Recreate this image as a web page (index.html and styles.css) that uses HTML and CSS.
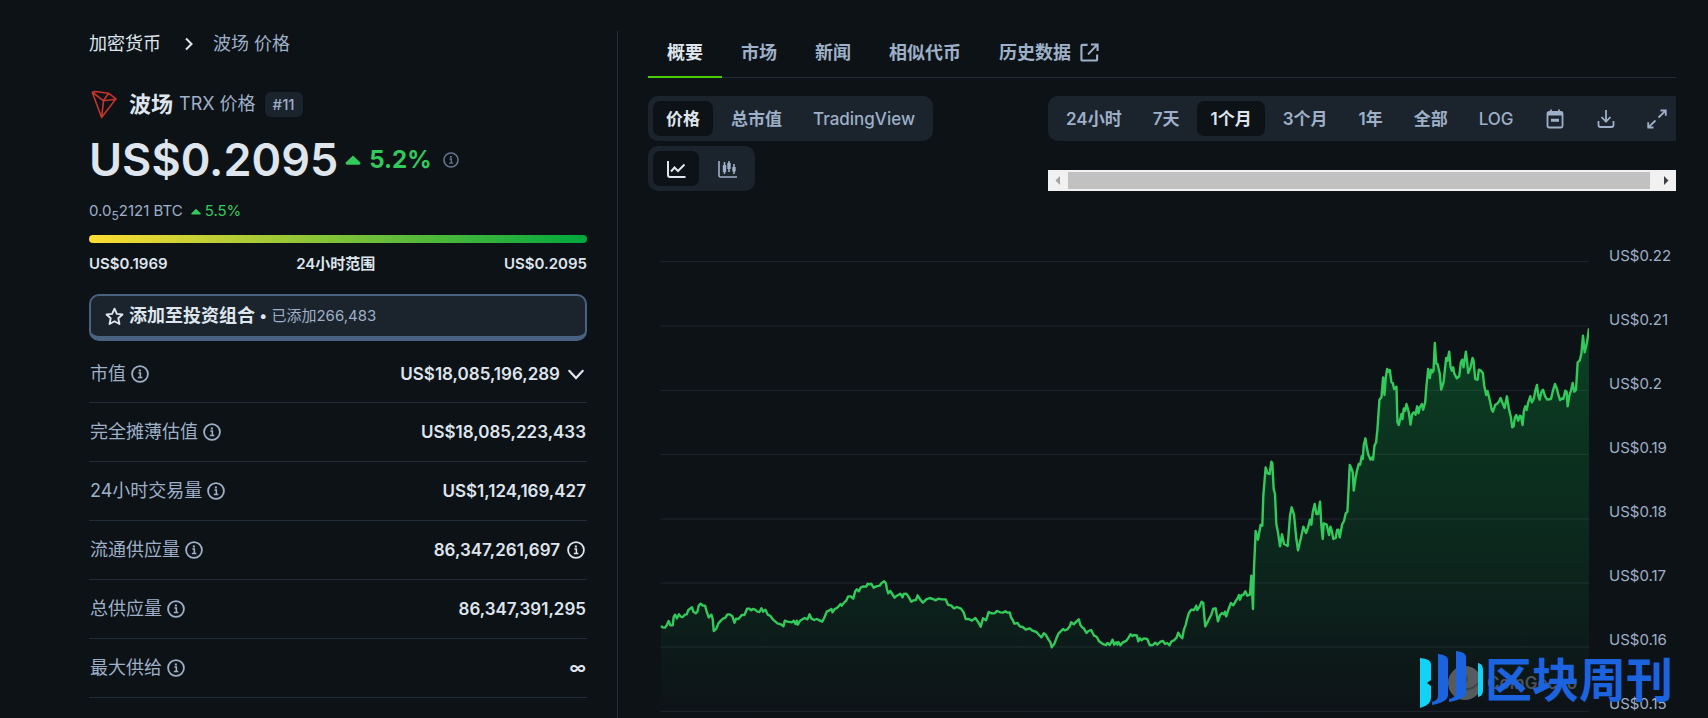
FILE: index.html
```html
<!DOCTYPE html>
<html lang="zh-CN">
<head>
<meta charset="utf-8">
<meta name="viewport" content="width=device-width, initial-scale=1">
<title>波场 价格</title>
<link rel="stylesheet" href="styles.css">
</head>
<body>
<svg class="defs" aria-hidden="true">
  <symbol id="info" viewBox="0 0 20 20"><circle cx="10" cy="10" r="8.8" fill="none" stroke="currentColor" stroke-width="2"/><path d="M8.2 8.8h2.2v5M7.6 13.9h5" fill="none" stroke="currentColor" stroke-width="1.7"/><rect x="8.7" y="5" width="2.3" height="2.2" fill="currentColor"/></symbol>
  <symbol id="up" viewBox="0 0 16 10"><path d="M8 0.5 15.3 7.6Q16 9.6 14 9.7H2Q0 9.6.7 7.6Z" fill="currentColor"/></symbol>
</svg>
<main class="page">
  <section class="coin">
    <nav class="crumbs" aria-label="路径">
      <a class="crumb-link" href="#">加密货币</a>
      <svg class="crumb-arrow" viewBox="0 0 8 14" fill="none" stroke="currentColor" stroke-width="2"><path d="M1 1.5 6.5 7 1 12.5"/></svg>
      <span>波场 价格</span>
    </nav>
    <h1 class="title">
      <svg class="logo" viewBox="0 0 26 29" fill="none" stroke="#c4342b" stroke-width="1.6" stroke-linejoin="round"><path d="M1.500 3 Q1.500 1.500 4 1.500L17.500 3.200 25 8.800 10.600 27.500ZM1.800 2.500 12.500 10.800 10.600 27.500M12.500 10.800 25 9.200M12.500 10.800 17.500 3.200"/></svg>
      <span class="name">波场</span>
      <span class="ticker">TRX 价格</span>
      <span class="rank">#11</span>
    </h1>
    <div class="price">
      <span class="amount">US$0.2095</span>
      <span class="change"><svg class="up-lg"><use href="#up"/></svg>5.2%</span>
      <svg class="info-sm"><use href="#info"/></svg>
    </div>
    <div class="btc">
      <span>0.0<sub>5</sub>2121 BTC</span>
      <span class="btc-change"><svg class="up-sm"><use href="#up"/></svg>5.5%</span>
    </div>
    <div class="range-bar"></div>
    <div class="range"><span>US$0.1969</span><span>24小时范围</span><span>US$0.2095</span></div>
    <button class="portfolio" type="button">
      <svg class="star" viewBox="0 0 20 20" fill="none" stroke="currentColor" stroke-width="2" stroke-linejoin="round"><path d="M10 1.8 12.5 7.2 18.4 7.9 14 11.9 15.2 17.9 10 15 4.8 17.9 6 11.9 1.6 7.9 7.5 7.2Z"/></svg>
      <span class="portfolio-label">添加至投资组合</span>
      <span class="dot">•</span>
      <span class="portfolio-count">已添加266,483</span>
    </button>
    <table class="stats">
      <tr class="first"><th scope="row"><span class="cell">市值<svg class="info"><use href="#info"/></svg></span></th><td><span class="cell end">US$18,085,196,289<svg class="info" viewBox="0 0 20 20" fill="none" stroke="currentColor" stroke-width="2.4" stroke-linecap="round"><path d="M2.500 6.500 10 14.500 17.500 6.500"/></svg></span></td></tr>
      <tr><th scope="row"><span class="cell">完全摊薄估值<svg class="info"><use href="#info"/></svg></span></th><td>US$18,085,223,433</td></tr>
      <tr><th scope="row"><span class="cell">24小时交易量<svg class="info"><use href="#info"/></svg></span></th><td>US$1,124,169,427</td></tr>
      <tr><th scope="row"><span class="cell">流通供应量<svg class="info"><use href="#info"/></svg></span></th><td><span class="cell end">86,347,261,697<svg class="info"><use href="#info"/></svg></span></td></tr>
      <tr><th scope="row"><span class="cell">总供应量<svg class="info"><use href="#info"/></svg></span></th><td>86,347,391,295</td></tr>
      <tr><th scope="row"><span class="cell">最大供给<svg class="info"><use href="#info"/></svg></span></th><td>∞</td></tr>
    </table>
  </section>
  <section class="market">
    <nav class="tabs" aria-label="栏目">
      <a class="tab active" href="#">概要</a>
      <a class="tab" href="#">市场</a>
      <a class="tab" href="#">新闻</a>
      <a class="tab" href="#">相似代币</a>
      <a class="tab" href="#">历史数据<svg class="ext" viewBox="0 0 20 20" fill="none" stroke="currentColor" stroke-width="2.2"><path d="M8 2H2.500Q1.500 2 1.500 3V17.500Q1.500 18.500 2.500 18.500H17Q18 18.500 18 17.500V12M11.500 1.500H18.500V8.500M18 2 8.500 12"/></svg></a>
    </nav>
    <div class="controls">
      <div class="control-col">
        <div class="group">
          <button class="opt strong on" type="button">价格</button>
          <button class="opt strong" type="button">总市值</button>
          <button class="opt" type="button">TradingView</button>
        </div>
        <div class="group">
          <button class="opt on" type="button" aria-label="折线图"><svg class="ico" viewBox="0 0 20 20" fill="none" stroke="currentColor" stroke-width="2"><path d="M2 2V16Q2 18 4 18H19.500M5 12.500 8.500 8.500 12 12 18.500 5.500"/></svg></button>
          <button class="opt" type="button" aria-label="蜡烛图"><svg class="ico" viewBox="0 0 20 20" fill="none" stroke="currentColor" stroke-width="1.600"><path d="M2 2V16.500Q2 18 3.500 18H20M7.500 3V15M12 2V13M17 5V15"/><path d="M7.500 6V13M12 4V10M17 8V12.500" stroke-width="3.400"/></svg></button>
        </div>
      </div>
      <div class="control-col periods">
        <div class="group clipped">
          <button class="opt strong" type="button">24小时</button>
          <button class="opt strong" type="button">7天</button>
          <button class="opt strong on" type="button">1个月</button>
          <button class="opt strong" type="button">3个月</button>
          <button class="opt strong" type="button">1年</button>
          <button class="opt strong" type="button">全部</button>
          <button class="opt" type="button">LOG</button>
          <button class="opt tool" type="button" aria-label="日期"><svg class="ico-lg" viewBox="0 0 22 22" fill="none" stroke="currentColor" stroke-width="1.800"><rect x="3.500" y="4" width="15" height="15.500" rx="1.500"/><path d="M7 1.500V5M15 1.500V5"/><path d="M3.500 6H18.500" stroke-width="3"/><path d="M7 12.200H15" stroke-width="3"/></svg></button>
          <button class="opt tool" type="button" aria-label="下载"><svg class="ico-lg" viewBox="0 0 22 22" fill="none" stroke="currentColor" stroke-width="1.800"><path d="M3.500 13V17Q3.500 19 5.500 19H16.500Q18.500 19 18.500 17V13M11 2V13.500M6.500 9 11 13.700 15.500 9"/></svg></button>
          <button class="opt tool" type="button" aria-label="全屏"><svg class="ico-lg" viewBox="0 0 22 22" fill="none" stroke="currentColor" stroke-width="1.800"><path d="M14.500 2.500H19.800V7.800M19.500 2.800 12.500 9.500M7.500 19.500H2.200V14.200M2.500 19.200 9.500 12.500"/></svg></button>
        </div>
        <div class="scroll" aria-hidden="true">
          <svg class="scroll-arrow dim" viewBox="0 0 20 21"><path d="M12 6V15L7.500 10.500Z" fill="currentColor"/></svg>
          <div class="thumb"></div>
          <svg class="scroll-arrow next" viewBox="0 0 26 21"><path d="M14 6V15L18.500 10.500Z" fill="currentColor"/></svg>
        </div>
      </div>
    </div>
    <div class="chart">
      <svg class="plot" viewBox="0 0 2784 1386" preserveAspectRatio="none" role="img" aria-label="1个月价格走势">
        <defs><linearGradient id="fade" gradientUnits="userSpaceOnUse" x1="0" y1="220" x2="0" y2="1386"><stop offset="0" stop-color="#0a4a25" stop-opacity=".85"/><stop offset=".6" stop-color="#0b3a22" stop-opacity=".5"/><stop offset="1" stop-color="#0b3a22" stop-opacity="0"/></linearGradient></defs>
        <path id="area" fill="url(#fade)"/>
        <path class="grid" d="M0 20H2784M0 213H2784M0 406H2784M0 598H2784M0 792H2784M0 984H2784M0 1176H2784M0 1369H2784"/>
        <path id="line" class="line" stroke-width="2.4"/>
      </svg>
      <div class="axis"><span>US$0.22</span><span>US$0.21</span><span>US$0.2</span><span>US$0.19</span><span>US$0.18</span><span>US$0.17</span><span>US$0.16</span><span>US$0.15</span></div>
      <div class="gecko"><svg class="gecko-mark" viewBox="0 0 36 36"><circle cx="18" cy="18" r="17" fill="#555b5e"/><circle cx="16" cy="14" r="5" fill="#444a4d"/><circle cx="16" cy="14" r="2" fill="#20282b"/><path d="M18 24Q26 25 31 18" fill="none" stroke="#3e4548" stroke-width="2"/></svg>CoinGecko</div>
      <div class="brand">
        <svg class="brand-mark" viewBox="0 0 66 60"><path d="M1 8Q12 9 12 14V30L8 33L12 36V48Q12 55 1 58ZM59 13Q64 14 64 20V40Q64 46 59 47Z" fill="#12d3f5"/><path d="M19 4Q29 5 29 10V45Q29 52 13 55V52Q19 50 19 46ZM37 1Q47 2 47 7V43Q47 49 30 52V49Q37 47 37 43Z" fill="#1c63e0"/></svg>
        <span>区块周刊</span>
      </div>
    </div>
  </section>
</main>
<script src="chart.js"></script>
</body>
</html>
```
FILE: styles.css
```css
* { box-sizing: border-box; }
body { margin: 0; background: #0d1217; color: #dfe5ec; font: 17px/24px Inter, "Noto Sans CJK SC", sans-serif; overflow: hidden; }
a { color: inherit; text-decoration: none; }
button { font: inherit; color: inherit; border: 0; background: none; cursor: pointer; }
svg { display: block; flex: none; }
.defs { position: absolute; width: 0; height: 0; }

.page { display: grid; grid-template-columns: minmax(0, 1fr) minmax(0, 2fr); min-height: 100vh; padding: 31px 32px 0 89px; }
.coin { padding-right: 30px; border-right: 1px solid #212d3b; }
.market { padding-left: 30px; min-width: 0; }

.crumbs { display: flex; align-items: center; padding-top: 1px; color: #9eb0c7; font-size: 18px; }
.crumb-link { color: #dfe5ec; }
.crumb-arrow { width: 8px; height: 14px; margin: 0 20px 0 24px; color: #dfe5ec; }
.title { display: flex; align-items: center; margin: 32px 0 0; height: 32px; font-weight: 400; font-size: 18px; }
.logo { width: 26px; height: 29px; margin: 0 12px 0 2px; }
.name { font-size: 22px; font-weight: 700; }
.ticker { margin: 0 9px 0 6px; color: #9eb0c7; }
.rank { padding: 0 8px; border-radius: 6px; background: #1b232d; color: #9eb0c7; font-size: 15px; font-weight: 500; line-height: 25px; }
.price { display: flex; align-items: center; height: 48px; margin-top: 16px; }
.amount { font-size: 45px; font-weight: 600; line-height: 48px; }
.change { display: flex; align-items: center; gap: 8px; margin: 0 11px 0 7px; color: #32ca5b; font-size: 24px; font-weight: 700; }
.up-lg { width: 16px; height: 10px; }
.info-sm { width: 16px; height: 16px; color: #64748b; }
.btc { display: flex; align-items: center; gap: 8px; margin-top: 15px; color: #9eb0c7; font-size: 15px; }
.btc sub { font-size: 12px; line-height: 0; }
.btc-change { display: flex; align-items: center; gap: 4px; color: #32ca5b; }
.up-sm { width: 10px; height: 7px; }
.range-bar { height: 8px; margin-top: 12px; border-radius: 4px; background: linear-gradient(90deg, #ffdc32, #00a83e); }
.range { display: flex; justify-content: space-between; margin-top: 9px; font-size: 15px; font-weight: 600; }
.portfolio { display: flex; align-items: center; width: 100%; height: 47px; margin-top: 18px; padding: 0 14px; border: 2px solid #4a6282; border-bottom-width: 5px; border-radius: 10px; background: #1b232d; }
.star { width: 19px; height: 19px; margin-right: 5px; }
.portfolio-label { font-size: 18px; font-weight: 700; }
.dot { margin: 0 4px; font-size: 15px; }
.portfolio-count { color: #9eb0c7; font-size: 15px; }
.stats { width: 100%; margin-top: 2px; border-collapse: collapse; }
.stats th, .stats td { height: 59px; padding: 0 1px; border-bottom: 1px solid #212d3b; }
.stats .first th, .stats .first td { padding-top: 4px; }
.stats th { color: #9eb0c7; font-size: 18px; font-weight: 400; text-align: left; }
.stats td { font-weight: 600; text-align: right; }
.cell { display: flex; align-items: center; gap: 5px; }
.end { justify-content: flex-end; gap: 7px; padding-right: 1px; }
.info { width: 18px; height: 18px; }

.tabs { display: flex; height: 47px; border-bottom: 1px solid #212d3b; color: #9eb0c7; font-size: 18px; font-weight: 700; }
.tab { display: flex; align-items: center; gap: 9px; height: 47px; padding: 0 19px 2px; border-bottom: 2px solid transparent; }
.tab.active { color: #dfe5ec; border-bottom-color: #4bcc00; }
.ext { width: 19px; height: 19px; }
.controls { display: grid; grid-template-columns: 400px minmax(0, 1fr); margin-top: 18px; }
.control-col { display: flex; flex-direction: column; align-items: flex-start; gap: 5px; min-width: 0; }
.periods { align-items: stretch; justify-content: space-between; }
.group { display: flex; gap: 5px; padding: 5px; border-radius: 10px; background: #1b232d; color: #9eb0c7; }
.clipped { overflow: hidden; border-radius: 10px 0 0 10px; }
.opt { display: flex; align-items: center; flex: none; height: 35px; padding: 0 13px; border-radius: 7px; font-weight: 500; white-space: nowrap; }
.opt.on { background: #0d1217; color: #dfe5ec; }
.strong { font-weight: 600; }
.tool { padding: 0 12px; }
.ico { width: 20px; height: 20px; }
.ico-lg { width: 22px; height: 22px; }
.scroll { display: flex; height: 21px; background: #f1f1f1; }
.scroll-arrow { width: 20px; height: 21px; color: #404040; }
.scroll-arrow.dim { color: #a3a3a3; }
.scroll-arrow.next { width: 26px; }
.thumb { flex: 1; margin: 2px 0; background: #c1c1c1; }

.chart { position: relative; display: flex; margin-top: 64px; padding-left: 12px; }
.plot { flex: 1; min-width: 0; height: 462px; }
.grid { fill: none; stroke: #9eb0c7; stroke-opacity: .13; stroke-width: 1px; vector-effect: non-scaling-stroke; }
.line { fill: none; stroke: #32ca5b; stroke-linejoin: round; vector-effect: non-scaling-stroke; }
.axis { display: flex; flex-direction: column; gap: 40px; width: 87px; margin-top: -11px; padding-left: 20px; color: #9eb0c7; font-size: 15px; }
.gecko { position: absolute; right: 99px; bottom: 16px; display: flex; align-items: center; gap: 4px; color: #4b5356; font-size: 17px; font-weight: 600; }
.gecko-mark { width: 36px; height: 36px; }
.brand { position: absolute; right: 3px; bottom: 7px; display: flex; align-items: center; color: #1c63e0; font-size: 47px; font-weight: 700; line-height: 60px; white-space: nowrap; }
.brand-mark { width: 66px; height: 60px; }
```
FILE: chart.js
```js
// Each run holds x,y pairs relative to its own origin in plot units.
const runs = [
  { x: -30, y: 912, points: "33,201 38,205 45,206 50,199 56,186 61,199 68,199 71,174 75,167 81,178 87,166 92,173 98,174 105,167 110,166 115,153 126,145 130,158 137,163 142,158 146,140 152,134 158,140 165,140 170,158 176,175 184,167 188,180 191,216 199,209 205,193 213,184 220,178 226,176 232,166 238,166 247,172 253,191 258,179 265,180 275,168 283,168 291,149 298,149 303,154 308,150 315,152 322,158 328,159 334,148 339,158 346,152 353,167 361,171 368,181 375,187 382,193 392,196 400,202 404,185 412,188 425,190 431,185 436,195 440,185 443,197 450,185 458,180 464,177 472,181 478,166 484,179 492,183 500,180 508,184 516,188 522,177 530,157 538,154 544,150 547,160 553,151 563,145 571,135 575,140 582,130 588,125 594,112 602,112 609,119 615,97 620,91 626,97 632,85 640,82 648,83 652,74 658,76 663,74 670,86 678,82 688,80 694,72 702,67 707,73 710,90 714,103 720,96 726,105 733,116 740,110 750,104 757,115 760,105 768,104 776,115 783,128 790,124 797,123 802,109 810,122 818,131 828,121 838,117 848,120 856,124 864,119 874,121 886,121 893,137 903,140 911,148 920,144 932,149 940,160 946,180 955,180 965,185 975,177 984,190 991,203 998,178 1007,184 1015,159 1024,163 1032,163 1040,156 1050,160" },
  { x: 900, y: 852, points: "127,221 135,217 141,221 148,220 152,235 158,245 162,254 172,252 178,262 187,264 196,272 208,268 216,275 228,279 236,288 243,295 250,283 256,287 263,300 270,310 274,325 282,314 288,298 294,284 300,278 308,270 313,274 321,271 328,262 332,250 340,256 348,247 355,241 360,258 365,265 370,268 378,282 384,276 392,273 400,289 409,294 416,307 424,313 430,316 437,318 441,312 448,318 456,302 461,317 467,310 471,317 474,309 480,319 486,311 498,305 504,296 510,286 516,291 520,288 529,289 533,307 538,298 543,304 550,298 560,300 568,319 577,318 584,311 590,317 600,308 607,306 614,315 620,312 627,319 632,308 640,304 648,296 653,281 658,290 665,298 670,272 676,256 680,238 685,222 692,212 700,213 704,207 707,200 710,213 716,205 723,188 728,192 731,230 734,262 742,247 752,227 758,209 765,208 769,230 772,247 778,229 784,222 790,226 793,218 797,232 804,210 811,192 818,199 826,185 832,176 835,168 838,182 843,168 848,168 854,157 860,170 868,167 872,110 877,210 880,90 884,0" },
  { x: 1710, y: 192, points: "75,636 82,662 90,617 95,620 98,530 105,445 111,463 117,465 122,428 125,433 129,510 133,525 137,615 142,640 148,682 154,646 160,675 171,681 178,590 183,565 190,587 197,660 202,694 210,660 218,623 226,642 232,625 238,602 242,617 246,580 252,555 257,585 262,585 268,548 272,620 276,660 279,613 288,617 295,648 299,623 303,635 308,660 315,657 319,633 323,632 327,655 334,617 340,605 345,583 350,578 354,500 357,438 362,448 366,460 369,515 374,480 378,458 384,435 388,437 393,412 396,420 399,378 404,358 408,385 412,405 419,422 424,415 427,422 431,380 436,370 440,330 446,242 452,235 457,175 461,228 465,175 469,150 473,158 477,153 482,190 486,192 490,210 497,203 500,310 504,318 512,285 515,300 519,268 523,275 527,255 534,280 539,317 544,285 549,280 554,287 559,262 563,283 567,265 573,255 577,272 583,250 587,200 592,150 597,177 601,152 605,160 608,155 612,72 616,133 620,135 627,165 631,212 638,190 646,117 650,125 655,98 659,143 663,155 667,145 670,163 678,178 685,172 690,130 694,122 698,145 705,98 709,130 712,162 719,145 725,117 728,125 733,180 740,182 744,152 750,155 756,163 760,200 766,228 770,216 777,245 782,270 786,278 793,258 800,253 804,248 809,237 815,253 821,267 828,232 834,270 840,295 844,325 848,322 852,295 856,288 862,305 867,290 870,292 875,318 879,275 883,262 887,273 892,250 898,232 903,250 909,238 913,215 918,198 922,230 926,242 931,220 936,212 943,233 949,242 960,240 966,215 972,195 978,210 983,230 987,243 993,238 997,240 1003,215 1007,218 1010,262 1015,230 1020,215 1025,192 1030,218 1035,213 1040,130 1046,125 1051,105 1056,50 1061,100 1068,70 1074,28" }
];
const path = "M" + runs.flatMap(run => run.points.split(" ").map(pair => {
  const [x, y] = pair.split(",").map(Number);
  return (x + run.x) + " " + (y + run.y);
})).join("L");
document.getElementById("line").setAttribute("d", path);
document.getElementById("area").setAttribute("d", path + "V1386H3Z");
```
